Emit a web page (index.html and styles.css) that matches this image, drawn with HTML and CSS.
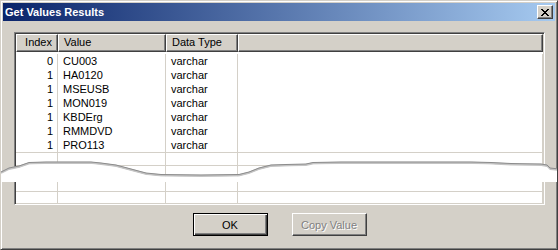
FILE: index.html
```html
<!DOCTYPE html>
<html lang="en">
<head>
    <meta charset="UTF-8">
    <meta name="viewport" content="width=device-width, initial-scale=1.0">
    <title>Get Values Results</title>
    <link rel="stylesheet" href="styles.css">
</head>
<body>
    <div class="window">
        <div class="titlebar">
            <span class="title">Get Values Results</span>
            <button class="close-btn" aria-label="Close">
                <svg width="8" height="7" viewBox="0 0 8 7">
                    <path d="M0 0h2v1h-2zM6 0h2v1h-2zM1 1h2v1h-2zM5 1h2v1h-2zM2 2h4v1h-4zM3 3h2v1h-2zM2 4h4v1h-4zM1 5h2v1h-2zM5 5h2v1h-2zM0 6h2v1h-2zM6 6h2v1h-2z" fill="#000"/>
                </svg>
            </button>
        </div>
        <div class="content">
            <div class="listview">
                <div class="lv-header">
                    <div class="lv-col col-index">Index</div>
                    <div class="lv-col">Value</div>
                    <div class="lv-col">Data Type</div>
                    <div class="lv-col"></div>
                </div>
                <div class="lv-body">
                    <div class="lv-row"><div class="cell-index">0</div><div>CU003</div><div>varchar</div><div></div></div>
                    <div class="lv-row"><div class="cell-index">1</div><div>HA0120</div><div>varchar</div><div></div></div>
                    <div class="lv-row"><div class="cell-index">1</div><div>MSEUSB</div><div>varchar</div><div></div></div>
                    <div class="lv-row"><div class="cell-index">1</div><div>MON019</div><div>varchar</div><div></div></div>
                    <div class="lv-row"><div class="cell-index">1</div><div>KBDErg</div><div>varchar</div><div></div></div>
                    <div class="lv-row"><div class="cell-index">1</div><div>RMMDVD</div><div>varchar</div><div></div></div>
                    <div class="lv-row"><div class="cell-index">1</div><div>PRO113</div><div>varchar</div><div></div></div>
                    <div class="lv-row filler"><div></div><div></div><div></div><div></div></div>
                    <div class="lv-row filler"><div></div><div></div><div></div><div></div></div>
                    <div class="lv-row filler"><div></div><div></div><div></div><div></div></div>
                    <div class="lv-row filler"><div></div><div></div><div></div><div></div></div>
                    <div class="lv-row filler"><div></div><div></div><div></div><div></div></div>
                </div>
            </div>
            <div class="buttons">
                <button class="btn btn-default">OK</button>
                <button class="btn" disabled>Copy Value</button>
            </div>
        </div>
        <!-- torn edge over the list -->
        <svg class="tear" width="558" height="250" viewBox="0 0 558 250">
            <polyline fill="none" stroke="#c4c4c4" stroke-width="2.5" points="0,172 8,168 18,166 28,162.5 45,162 90,162 100,163 115,165 130,169 145,173 160,174.5 200,175 238,174.5 248,172 258,168 270,165 285,164.5 305,164 312,162.5 340,162 470,162 490,162.5 510,163.5 540,164 546,165 549,168 558,169"/>
            <polygon fill="#fff" points="0,173 8,169 18,167 28,163.5 45,163 90,163 100,164 115,166 130,170 145,174 160,175.5 200,176 238,175.5 248,173 258,169 270,166 285,165.5 305,165 312,163.5 340,163 470,163 490,163.5 510,164.5 540,165 546,166 549,169 558,170 558,181 0,181"/>
            <polyline fill="none" stroke="#8c8c8c" stroke-width="1" points="0,171 8,167 18,165 28,161.5 45,161 90,161 100,162 115,164 130,168 145,172 160,173.5 200,174 238,173.5 248,171 258,167 270,164 285,163.5 305,163 312,161.5 340,161 470,161 490,161.5 510,162.5 540,163 546,164 549,167 558,168"/>
        </svg>
    </div>
</body>
</html>
```

FILE: styles.css
```css
/* Classic dialog colours */
:root {
  --face: #d4d0c8;
  --light: #fff;
  --shadow: #808080;
  --dark: #404040;
  --grid: #d4d0c8;
}
body {
  margin: 0;
  padding: 0;
  font-family: 'Liberation Sans', Arial, sans-serif;
  font-size: 11px;
  background: var(--face);
  color: #000;
}
.window {
  position: relative;
  width: 558px;
  height: 250px;
  box-sizing: border-box;
  background: var(--face);
  border: 1px solid;
  border-color: var(--face) var(--dark) var(--dark) var(--face);
  box-shadow: inset 1px 1px var(--light), inset -1px -1px var(--shadow);
  padding: 2px;
  overflow: hidden;
}
.titlebar {
  height: 18px;
  display: flex;
  align-items: center;
  justify-content: space-between;
  padding: 0 2px;
  background: linear-gradient(to right, #0a246a, #a6caf0);
  color: #fff;
}
.title {
  font-weight: bold;
  font-size: 11px;
}
.close-btn {
  width: 16px;
  height: 14px;
  padding: 0;
  display: flex;
  align-items: center;
  justify-content: center;
  background: var(--face);
  border: 1px solid;
  border-color: var(--light) var(--dark) var(--dark) var(--light);
  box-shadow: inset -1px -1px var(--shadow);
}
.content {
  padding: 11px 10px 0 11px;
}
.listview {
  height: 173px;
  box-sizing: border-box;
  display: flex;
  flex-direction: column;
  background: #fff;
  border: 1px solid;
  border-color: var(--shadow) var(--light) var(--light) var(--shadow);
  box-shadow: inset 1px 1px var(--dark), inset -1px -1px var(--face);
  padding: 1px;
  overflow: hidden;
}
.lv-header, .lv-row {
  display: grid;
  grid-template-columns: 42px 108px 72px 1fr;
}
.lv-header {
  height: 18px;
  flex: none;
  background: var(--face);
}
.lv-col {
  box-sizing: border-box;
  border: 1px solid;
  border-color: var(--light) var(--dark) var(--dark) var(--light);
  box-shadow: inset -1px -1px var(--shadow);
  padding: 0 5px;
  line-height: 15px;
  white-space: nowrap;
}
.col-index {
  text-align: right;
}
.lv-body {
  flex: 1;
  overflow: hidden;
}
.lv-row {
  height: 14px;
  line-height: 14px;
}
.lv-row:first-child {
  height: 16px;
  padding-top: 2px;
  box-sizing: border-box;
}
.lv-row > div {
  border-right: 1px solid var(--grid);
  padding: 0 5px;
  white-space: nowrap;
}
.lv-row .cell-index {
  text-align: right;
  padding-right: 4px;
}
.lv-row.filler {
  height: 13px;
  box-sizing: border-box;
  border-top: 1px solid var(--grid);
}
.buttons {
  display: flex;
  justify-content: center;
  gap: 24px;
  margin-top: 8px;
}
.btn {
  width: 75px;
  height: 23px;
  padding: 0;
  font-family: inherit;
  font-size: 11px;
  color: #000;
  background: var(--face);
  border: 1px solid;
  border-color: var(--light) var(--dark) var(--dark) var(--light);
  box-shadow: inset -1px -1px var(--shadow);
}
.btn-default {
  border-color: #000;
  box-shadow: inset 1px 1px var(--light), inset -1px -1px var(--dark), inset -2px -2px var(--shadow);
}
.btn:disabled {
  color: var(--shadow);
  text-shadow: 1px 1px var(--light);
}
.tear {
  position: absolute;
  top: 0;
  left: 0;
  pointer-events: none;
}
```
